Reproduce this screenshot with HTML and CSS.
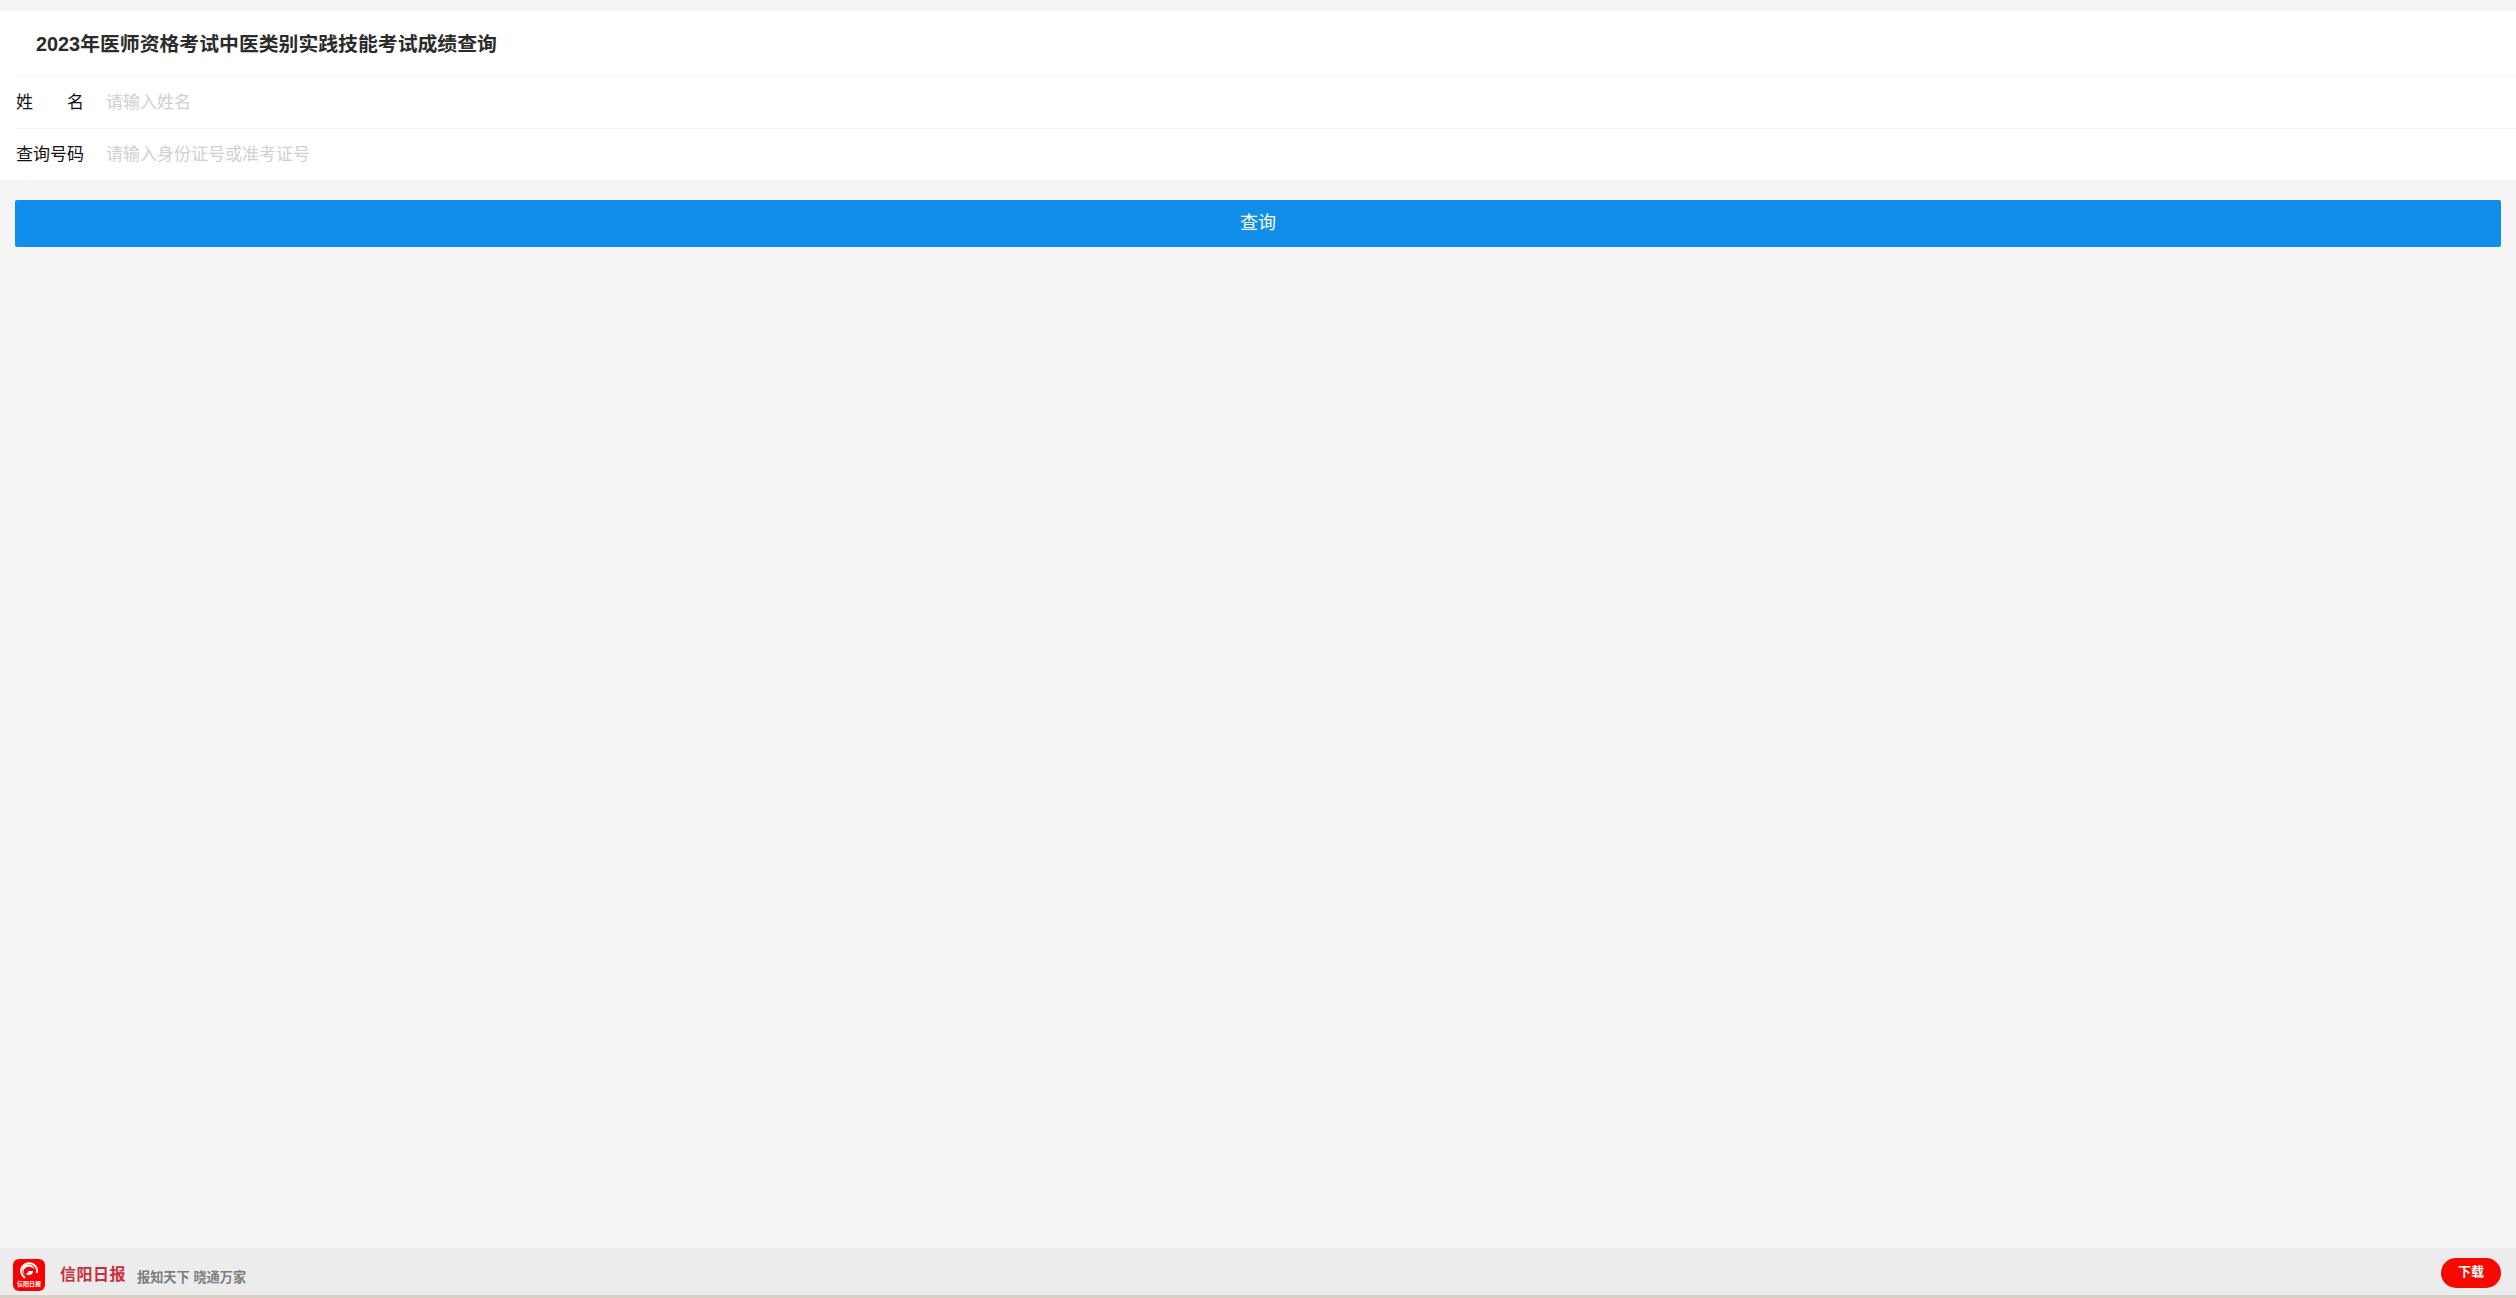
FILE: index.html
```html
<!DOCTYPE html>
<html lang="zh-CN">
<head>
<meta charset="utf-8">
<title>2023年医师资格考试中医类别实践技能考试成绩查询</title>
<link rel="stylesheet" href="styles.css">
</head>
<body>
<main class="page">
  <section class="card">
    <h1 class="title">2023年医师资格考试中医类别实践技能考试成绩查询</h1>
    <div class="row">
      <label class="label label-spread" for="name"><span>姓</span><span>名</span></label>
      <input class="field" id="name" type="text" placeholder="请输入姓名">
    </div>
    <div class="row">
      <label class="label" for="num">查询号码</label>
      <input class="field" id="num" type="text" placeholder="请输入身份证号或准考证号">
    </div>
  </section>
  <div class="actions"><button class="submit" type="button">查询</button></div>
</main>
<footer class="bar">
  <div class="app-icon">
    <svg class="swirl" viewBox="0 0 24 24" width="20" height="20" aria-hidden="true">
      <circle cx="12" cy="12" r="9.5" fill="none" stroke="#fff" stroke-width="2.2" stroke-dasharray="42 18" transform="rotate(120 12 12)"/>
      <path d="M5 6c5-4 12-2 14 4-3-3-8-4-11-2-3 2-3 6-1 9-3-3-4-8-2-11z" fill="#fff"/>
      <path d="M11 12h6c0 3-2 5-5 5-2 0-3-1-4-2 2 0 4-1 3-3z" fill="#fff"/>
    </svg>
    <span class="app-name">信阳日报</span>
  </div>
  <span class="brand">信阳日报</span>
  <span class="slogan">报知天下 晓通万家</span>
  <a class="download">下载</a>
</footer>
</body>
</html>
```
FILE: styles.css
```css
* { box-sizing: border-box; }
html, body { margin: 0; height: 100%; }
body {
  height: 1298px;
  overflow: hidden;
  display: flex;
  flex-direction: column;
  background: #f5f5f5;
  font-family: "Liberation Sans", "Noto Sans CJK SC", sans-serif;
}
.page { flex: 1; padding-top: 11px; }
.card { background: #fff; height: 169px; }
.title {
  margin: 0;
  height: 65px;
  padding-left: 36px;
  font-size: 19.85px;
  line-height: 67px;
  font-weight: 700;
  color: #2b2b2b;
}
.row {
  display: flex;
  align-items: center;
  height: 52px;
  margin-left: 16px;
  border-top: 1px solid #f5f5f5;
}
.label {
  width: 90px;
  font-size: 17px;
  line-height: 24px;
  color: #111;
  flex: none;
  margin-top: 0;
}
.label-spread { display: flex; }
.label-spread span + span { margin-left: 34px; }
.field {
  flex: 1;
  border: 0;
  outline: 0;
  padding: 0;
  background: transparent;
  font: inherit;
  font-size: 17px;
  line-height: 24px;
  height: 24px;
}
.field::placeholder { color: #d0d0d0; opacity: 1; }
.actions { padding: 20px 15px 0 15px; }
.submit {
  display: block;
  width: 100%;
  height: 47px;
  border: 0;
  border-radius: 2px;
  background: #118eea;
  color: #fff;
  font: inherit;
  font-size: 18px;
  padding: 0 0 5px;
}
.bar {
  display: flex;
  align-items: center;
  height: 50px;
  padding: 0 15px 0 13px;
  background: #ececec;
  border-bottom: 3px solid #d8cfc6;
}
.app-icon {
  width: 32px;
  height: 32px;
  margin-top: 6px;
  border-radius: 6px;
  background: #fb0000;
  display: flex;
  flex-direction: column;
  align-items: center;
  flex: none;
}
.swirl { margin-top: 2px; }
.app-name {
  font-size: 6px;
  line-height: 7px;
  font-weight: 700;
  color: #fff;
  white-space: nowrap;
}
.brand {
  margin: 2px 0 0 15px;
  width: 66px;
  font-size: 16px;
  font-weight: 700;
  letter-spacing: 0.5px;
  color: #cb2f3a;
  white-space: nowrap;
}
.slogan {
  margin: 10px 0 0 11px;
  font-size: 13.2px;
  font-weight: 700;
  color: #7d7d7d;
  white-space: nowrap;
}
.download {
  margin: 2px 0 0 auto;
  width: 60px;
  height: 30px;
  border-radius: 15px;
  background: #f60a00;
  color: #fff;
  font-size: 13px;
  font-weight: 700;
  line-height: 28px;
  text-align: center;
}
```
